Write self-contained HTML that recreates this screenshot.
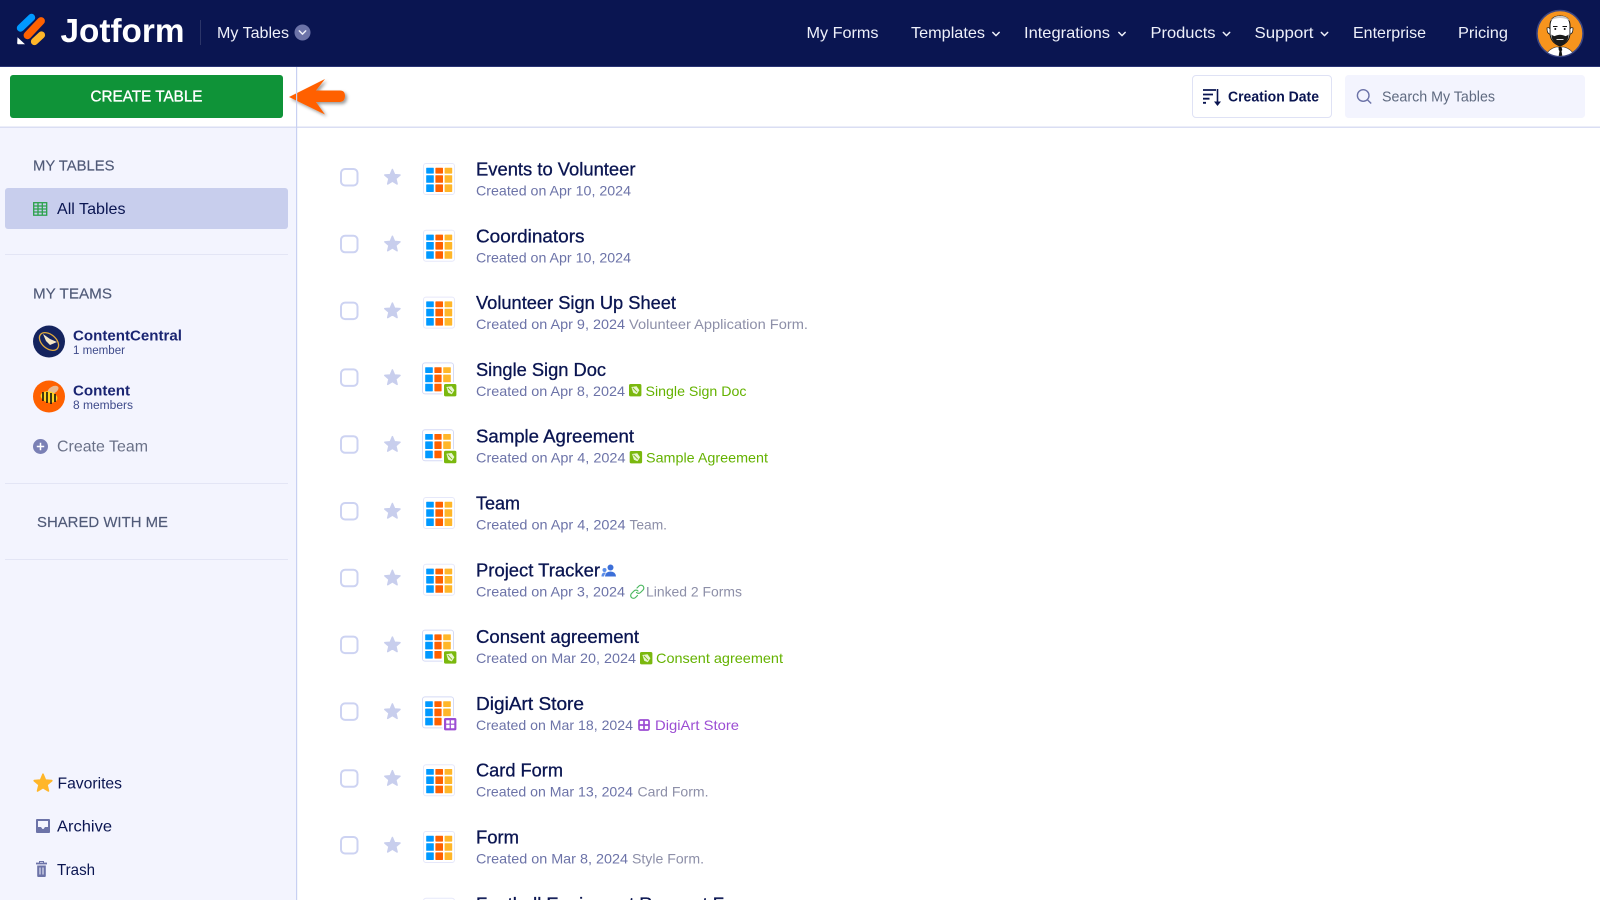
<!DOCTYPE html>
<html lang="en"><head><meta charset="utf-8"><title>My Tables</title>
<style>
html,body{margin:0;padding:0;background:#fff;width:1600px;height:900px;overflow:hidden}
svg{display:block;filter:blur(.3px)}
text{font-family:"Liberation Sans",sans-serif}
.nav{font-size:16px;fill:#eef0fa}
.t{font-size:18px;fill:#0a1551;stroke:#0a1551;stroke-width:.3}
.s{font-size:13.8px;fill:#6c73a8}
.d{font-size:13.8px;fill:#8d8fa8}
.g{font-size:13.8px;fill:#64b200}
.p{font-size:13.8px;fill:#9c4dd3}
.h{font-size:14.5px;fill:#505a78;stroke:#505a78;stroke-width:.15}
.m{font-size:16px;fill:#0a1551}
</style></head><body>
<svg width="1600" height="900" viewBox="0 0 1600 900" xmlns="http://www.w3.org/2000/svg">
<defs>
<filter id="sh" x="-20%" y="-30%" width="150%" height="170%"><feDropShadow dx="2" dy="2" stdDeviation="1.5" flood-color="#000" flood-opacity=".4"/></filter>
<path id="star" d="M0-8 2.12-2.91 7.6-2.47 3.42 1.11 4.7 6.47 0 3.6-4.7 6.47-3.42 1.11-7.6-2.47-2.12-2.91Z" stroke-width="1.5" stroke-linejoin="round"/>
<g id="base">
<rect x="341" y="169" width="16.5" height="16.5" rx="4" fill="#fff" stroke="#cdd3f2" stroke-width="2"/>
<use href="#star" x="392.4" y="177.5" fill="#c8ceed" stroke="#c8ceed"/>
</g>
<g id="tb">
<rect x="423.5" y="163.5" width="31" height="31" rx="2.5" fill="#fff" stroke="#e6e8fa"/>
<rect x="426.2" y="167.8" width="7.6" height="5.8" rx=".6" fill="#0099ff"/><rect x="435.4" y="167.8" width="7.6" height="5.8" rx=".6" fill="#ff6100"/><rect x="444.6" y="167.8" width="7.6" height="5.8" rx=".6" fill="#ffb629"/>
<rect x="426.2" y="175.2" width="7.6" height="7.6" rx=".6" fill="#0099ff"/><rect x="435.4" y="175.2" width="7.6" height="7.6" rx=".6" fill="#ff6100"/><rect x="444.6" y="175.2" width="7.6" height="7.6" rx=".6" fill="#ffb629"/>
<rect x="426.2" y="184.4" width="7.6" height="7.6" rx=".6" fill="#0099ff"/><rect x="435.4" y="184.4" width="7.6" height="7.6" rx=".6" fill="#ff6100"/><rect x="444.6" y="184.4" width="7.6" height="7.6" rx=".6" fill="#ffb629"/>
</g>
<g id="row"><use href="#base"/><use href="#tb"/></g>
<g id="tbb">
<rect x="422.5" y="162.5" width="31" height="31" rx="2.5" fill="#fff" stroke="#d5daf5"/>
<rect x="425.2" y="166.8" width="7.6" height="5.8" rx=".6" fill="#0099ff"/><rect x="434.4" y="166.8" width="7.2" height="5.8" rx=".6" fill="#ff6100"/><rect x="443.2" y="166.8" width="7.6" height="5.8" rx=".6" fill="#ffb629"/>
<rect x="425.2" y="174.2" width="7.6" height="7.6" rx=".6" fill="#0099ff"/><rect x="434.4" y="174.2" width="7.2" height="7.6" rx=".6" fill="#ff6100"/><rect x="443.2" y="174.2" width="7.6" height="7.6" rx=".6" fill="#ffb629"/>
<rect x="425.2" y="183.4" width="7.6" height="7.6" rx=".6" fill="#0099ff"/><rect x="434.4" y="183.4" width="7.2" height="7.6" rx=".6" fill="#ff6100"/>
<rect x="442.5" y="182" width="14.5" height="14.5" rx="1" fill="#fff"/>
</g>
<g id="leaf"><rect x="0" y="0" width="12.4" height="12.4" rx="1.6" fill="#7ab80e"/><path d="M2.4 3 7.6 2.2 10.4 6.2 7.8 10.2 4.2 8.8Z" fill="#e8f5d0"/><path d="M3.8 3.8 8 8.2" stroke="#7ab80e" stroke-width=".9"/></g>
<g id="rowg"><use href="#base"/><use href="#tbb"/><use href="#leaf" x="444" y="183.6"/></g>
<g id="pur" fill="none" stroke="#9c4dd3" stroke-width="1.7"><rect x="1" y="1" width="10" height="10" rx="1.4"/><path d="M6 1v10M1 6h10"/></g>
<g id="rowp"><use href="#base"/><use href="#tbb"/><rect x="444" y="183.6" width="12.4" height="12.4" rx="1.6" fill="#9c4dd3"/><path d="M446.2 185.8h3.4v3.4h-3.4zM450.9 185.8h3.4v3.4h-3.4zM446.2 190.4h3.4v3.4h-3.4zM450.9 190.4h3.4v3.4h-3.4z" fill="#fff"/></g>
<path id="chev" d="M-3.2-1.6 0 1.6 3.2-1.6" fill="none" stroke="#eef0fa" stroke-width="1.5" stroke-linecap="round" stroke-linejoin="round"/>
<clipPath id="av"><circle cx="1560" cy="33.5" r="22.5"/></clipPath>
</defs>

<!-- header -->
<rect width="1600" height="67" fill="#0a1551"/>
<rect y="66" width="1600" height="1" fill="#2a3474"/>
<path d="M20.500 28 31.500 17.500" stroke="#0099ff" stroke-width="7.400" stroke-linecap="round"/>
<path d="M27.500 35.300 41 21" stroke="#ff6100" stroke-width="7.800" stroke-linecap="round"/>
<path d="M34.500 41.500 41.500 35" stroke="#ffb629" stroke-width="7.200" stroke-linecap="round"/>
<path d="M17.500 37.200 25 44.300H18.600Q17.200 44.300 17.200 43Z" fill="#fff"/>
<text x="60.500" y="42" font-size="33" font-weight="700" fill="#fff" textLength="124" lengthAdjust="spacingAndGlyphs">Jotform</text>
<rect x="200" y="20" width="1" height="25" fill="#2c3568"/>
<text x="217" y="38" class="nav" textLength="72" lengthAdjust="spacingAndGlyphs">My Tables</text>
<circle cx="302.500" cy="32.500" r="8" fill="#6c73a8"/><use href="#chev" x="302.500" y="32.500"/>
<text x="806.500" y="38" class="nav" textLength="72" lengthAdjust="spacingAndGlyphs">My Forms</text>
<text x="911" y="38" class="nav" textLength="74" lengthAdjust="spacingAndGlyphs">Templates</text><use href="#chev" x="996" y="34"/>
<text x="1024" y="38" class="nav" textLength="86" lengthAdjust="spacingAndGlyphs">Integrations</text><use href="#chev" x="1122" y="34"/>
<text x="1150.500" y="38" class="nav" textLength="65" lengthAdjust="spacingAndGlyphs">Products</text><use href="#chev" x="1226.500" y="34"/>
<text x="1254.500" y="38" class="nav" textLength="59" lengthAdjust="spacingAndGlyphs">Support</text><use href="#chev" x="1324.500" y="34"/>
<text x="1353" y="38" class="nav" textLength="73" lengthAdjust="spacingAndGlyphs">Enterprise</text>
<text x="1458" y="38" class="nav" textLength="50" lengthAdjust="spacingAndGlyphs">Pricing</text>
<!-- user avatar -->
<circle cx="1560" cy="33.500" r="23" fill="#f7941d" stroke="#3b4684" stroke-width="1.500"/>
<g clip-path="url(#av)">
<path d="M1544 58Q1548 49 1556 47H1564Q1572 49 1576 58Z" fill="#fff" stroke="#222" stroke-width=".6"/>
<path d="M1558.500 47h3l.8 3-.8 1 1 6h-4l1-6-.8-1z" fill="#111"/>
<path d="M1550 25Q1550.500 16 1560 16 1569.500 16 1570 25V34Q1569 43 1560 46 1551 43 1550 34Z" fill="#fff" stroke="#111" stroke-width="1"/>
<path d="M1550 21Q1555 15 1560 16 1566 15 1570 21 1566 18 1560 18 1554 18 1550 21Z" fill="#c8c8c8"/>
<path d="M1551.500 34.500Q1554 37 1556 35.500 1560 34 1564 35.500 1566 37 1568.500 34.500 1569 42 1560 46 1551 42 1551.500 34.500Z" fill="#1a1a1a"/>
<path d="M1556.500 39.500h7" stroke="#ddd" stroke-width=".9"/>
<path d="M1553 26.500h4.500M1562.500 26.500h4.500" stroke="#111" stroke-width="1.100"/><circle cx="1555.300" cy="29" r="1" fill="#111"/><circle cx="1564.700" cy="29" r="1" fill="#111"/>
<path d="M1547 28q2-1 3 1v5q-3 0-3-6ZM1573 28q-2-1-3 1v5q3 0 3-6Z" fill="#fff" stroke="#111" stroke-width=".7"/>
</g>

<!-- toolbar -->
<rect x="0" y="126.500" width="1600" height="1.500" fill="#dadef3"/>
<rect x="10" y="75" width="273" height="43" rx="3" fill="#0f9338"/>
<text x="90.500" y="101.700" font-size="16" fill="#fff" stroke="#fff" stroke-width=".35" textLength="112" lengthAdjust="spacingAndGlyphs">CREATE TABLE</text>
<path d="M289 97 325 79 316 90.500H340Q345 90.500 345 96T340 102H316L325 114.500Z" fill="#ff6100" filter="url(#sh)"/>
<rect x="1192.500" y="75.500" width="139" height="42" rx="3.500" fill="#fff" stroke="#dfe2f5"/>
<path d="M1203 90h13M1203 94.500h10M1203 98.700h6.500M1203 102.800h3" stroke="#0a1551" stroke-width="1.800"/>
<path d="M1217.500 89v13" stroke="#0a1551" stroke-width="1.600"/><path d="M1214 101.500h7l-3.500 4.500z" fill="#0a1551"/>
<text x="1228" y="101.500" font-size="14.500" font-weight="700" fill="#0a1551" textLength="91" lengthAdjust="spacingAndGlyphs">Creation Date</text>
<rect x="1345" y="75" width="240" height="43" rx="3.500" fill="#f3f4fe"/>
<circle cx="1363.200" cy="95.500" r="5.800" fill="none" stroke="#6c73a8" stroke-width="1.400"/><path d="M1367.400 99.700 1371.200 103.500" stroke="#6c73a8" stroke-width="1.400"/>
<text x="1382" y="101.500" font-size="14.500" fill="#5f6a80" textLength="113" lengthAdjust="spacingAndGlyphs">Search My Tables</text>

<!-- sidebar -->
<rect x="0" y="128" width="296" height="772" fill="#f3f4fe"/>
<rect x="296" y="67" width="1.200" height="833" fill="#c8d0f2"/>
<text x="33" y="170.500" class="h" textLength="81.500" lengthAdjust="spacingAndGlyphs">MY TABLES</text>
<rect x="5" y="188" width="283" height="41" rx="3" fill="#c8ceed"/>
<g fill="none" stroke="#2ba14b" stroke-width="1.300"><rect x="33.700" y="202.700" width="13" height="12.500"/><path d="M38 203v12M42.300 203v12M34 206h13M34 209h13M34 212h13"/></g>
<text x="57" y="214" class="m" textLength="68.500" lengthAdjust="spacingAndGlyphs">All Tables</text>
<rect x="5" y="254" width="283" height="1" fill="#e3e5f5"/>
<text x="33" y="298.500" class="h" textLength="79" lengthAdjust="spacingAndGlyphs">MY TEAMS</text>
<circle cx="49" cy="341.500" r="16" fill="#14235e"/>
<ellipse cx="49" cy="341.500" rx="11" ry="7" transform="rotate(40 49 341.500)" fill="none" stroke="#e0a93c" stroke-width="1.300"/>
<path d="M43 334 50 339 57 342 50 345 46 341Z" fill="#f6e9c8"/>
<text x="73" y="340.500" font-size="14.500" font-weight="700" fill="#1a2572" textLength="109" lengthAdjust="spacingAndGlyphs">ContentCentral</text>
<text x="73" y="354" font-size="11.500" fill="#3e4a8a" textLength="52" lengthAdjust="spacingAndGlyphs">1 member</text>
<circle cx="49" cy="396.500" r="16" fill="#ff6100"/>
<ellipse cx="53" cy="390" rx="6" ry="3.500" transform="rotate(-30 53 390)" fill="#e8b98f"/>
<ellipse cx="49" cy="397" rx="8.500" ry="5.500" transform="rotate(15 49 397)" fill="#ffd21f"/>
<path d="M43 392v9M47 392v11M51 393v11M55 394v8" stroke="#111" stroke-width="1.600"/>
<text x="73" y="395.500" font-size="14.500" font-weight="700" fill="#1a2572" textLength="57" lengthAdjust="spacingAndGlyphs">Content</text>
<text x="73" y="409" font-size="11.500" fill="#3e4a8a" textLength="60" lengthAdjust="spacingAndGlyphs">8 members</text>
<circle cx="40.500" cy="446.500" r="7.500" fill="#7a80b5"/><path d="M36.800 446.500h7.400M40.500 442.800v7.400" stroke="#fff" stroke-width="1.500"/>
<text x="57" y="451.500" font-size="16" fill="#6a7188" textLength="91" lengthAdjust="spacingAndGlyphs">Create Team</text>
<rect x="5" y="483" width="283" height="1" fill="#e3e5f5"/>
<text x="37" y="527" class="h" textLength="131" lengthAdjust="spacingAndGlyphs">SHARED WITH ME</text>
<rect x="5" y="559" width="283" height="1" fill="#e3e5f5"/>
<g transform="translate(43 783.500) scale(1.150)"><use href="#star" fill="#ffb629" stroke="#ffb629"/></g>
<text x="57.500" y="788.500" class="m" textLength="64.500" lengthAdjust="spacingAndGlyphs">Favorites</text>
<rect x="36" y="819" width="14" height="14" rx="1" fill="#6c73a8"/><path d="M38 821h10v6h-3l-1.500 2h-1l-1.500-2h-3z" fill="#f3f4fe"/>
<text x="57" y="831.500" class="m" textLength="55" lengthAdjust="spacingAndGlyphs">Archive</text>
<path d="M36 863.500h11" stroke="#6c73a8" stroke-width="1.800"/><path d="M39.500 863v-1.500h4v1.500" stroke="#6c73a8" fill="none"/>
<path d="M37.200 865.500h8.600V876a1 1 0 0 1-1 1h-6.600a1 1 0 0 1-1-1z" fill="#6c73a8"/><path d="M40 867.500v7M43 867.500v7" stroke="#f3f4fe"/>
<text x="57" y="875" class="m" textLength="38" lengthAdjust="spacingAndGlyphs">Trash</text>

<!-- rows -->
<use href="#row"/>
<text x="476" y="175.700" class="t" textLength="159.500" lengthAdjust="spacingAndGlyphs">Events to Volunteer</text>
<text x="476" y="195.500" class="s" textLength="155" lengthAdjust="spacingAndGlyphs">Created on Apr 10, 2024</text>

<use href="#row" y="66.800"/>
<text x="476" y="242.500" class="t" textLength="108.500" lengthAdjust="spacingAndGlyphs">Coordinators</text>
<text x="476" y="262.300" class="s" textLength="155" lengthAdjust="spacingAndGlyphs">Created on Apr 10, 2024</text>

<use href="#row" y="133.600"/>
<text x="476" y="309" class="t" textLength="200" lengthAdjust="spacingAndGlyphs">Volunteer Sign Up Sheet</text>
<text x="476" y="329.100" class="s" textLength="149" lengthAdjust="spacingAndGlyphs">Created on Apr 9, 2024</text>
<text x="629" y="329.100" class="d" textLength="179" lengthAdjust="spacingAndGlyphs">Volunteer Application Form.</text>

<use href="#rowg" y="200.400"/>
<text x="476" y="375.800" class="t" textLength="130" lengthAdjust="spacingAndGlyphs">Single Sign Doc</text>
<text x="476" y="395.900" class="s" textLength="149" lengthAdjust="spacingAndGlyphs">Created on Apr 8, 2024</text>
<use href="#leaf" x="629" y="384"/>
<text x="645.500" y="395.900" class="g" textLength="101" lengthAdjust="spacingAndGlyphs">Single Sign Doc</text>

<use href="#rowg" y="267.200"/>
<text x="476" y="442.600" class="t" textLength="158" lengthAdjust="spacingAndGlyphs">Sample Agreement</text>
<text x="476" y="462.700" class="s" textLength="149.500" lengthAdjust="spacingAndGlyphs">Created on Apr 4, 2024</text>
<use href="#leaf" x="629.700" y="451"/>
<text x="646" y="462.700" class="g" textLength="122" lengthAdjust="spacingAndGlyphs">Sample Agreement</text>

<use href="#row" y="334"/>
<text x="476" y="509.400" class="t" textLength="44" lengthAdjust="spacingAndGlyphs">Team</text>
<text x="476" y="529.500" class="s" textLength="149.500" lengthAdjust="spacingAndGlyphs">Created on Apr 4, 2024</text>
<text x="629.500" y="529.500" class="d" textLength="37.500" lengthAdjust="spacingAndGlyphs">Team.</text>

<use href="#row" y="400.800"/>
<text x="476" y="576.600" class="t" textLength="124" lengthAdjust="spacingAndGlyphs">Project Tracker</text>
<circle cx="610.500" cy="567.500" r="3" fill="#3c6fd8"/><path d="M605 576.500q.5-5 5.500-5t5.500 5z" fill="#3c6fd8"/><circle cx="604.500" cy="570" r="2" fill="#5b8de8"/><path d="M601.500 576.500q0-4 3-4 1 0 1.500 .5-1.500 1-2 3.500z" fill="#5b8de8"/>
<text x="476" y="596.300" class="s" textLength="149" lengthAdjust="spacingAndGlyphs">Created on Apr 3, 2024</text>
<g fill="none" stroke="#4cb860" stroke-width="1.200" stroke-linecap="round"><path d="M637 588l2-2a2.800 2.800 0 0 1 4 4l-2.500 2.500a2.800 2.800 0 0 1-4 0"/><path d="M637.500 595.500l-2 2a2.800 2.800 0 0 1-4-4l2.500-2.500a2.800 2.800 0 0 1 4 0"/></g>
<text x="646" y="596.300" class="d" textLength="96" lengthAdjust="spacingAndGlyphs">Linked 2 Forms</text>

<use href="#rowg" y="467.600"/>
<text x="476" y="643" class="t" textLength="163" lengthAdjust="spacingAndGlyphs">Consent agreement</text>
<text x="476" y="663.100" class="s" textLength="160" lengthAdjust="spacingAndGlyphs">Created on Mar 20, 2024</text>
<use href="#leaf" x="640" y="652"/>
<text x="656" y="663.100" class="g" textLength="127" lengthAdjust="spacingAndGlyphs">Consent agreement</text>

<use href="#rowp" y="534.400"/>
<text x="476" y="709.800" class="t" textLength="108" lengthAdjust="spacingAndGlyphs">DigiArt Store</text>
<text x="476" y="729.900" class="s" textLength="157" lengthAdjust="spacingAndGlyphs">Created on Mar 18, 2024</text>
<use href="#pur" x="638" y="719"/>
<text x="655" y="729.900" class="p" textLength="84" lengthAdjust="spacingAndGlyphs">DigiArt Store</text>

<use href="#row" y="601.200"/>
<text x="476" y="776.600" class="t" textLength="87" lengthAdjust="spacingAndGlyphs">Card Form</text>
<text x="476" y="796.700" class="s" textLength="157" lengthAdjust="spacingAndGlyphs">Created on Mar 13, 2024</text>
<text x="637.500" y="796.700" class="d" textLength="71" lengthAdjust="spacingAndGlyphs">Card Form.</text>

<use href="#row" y="668"/>
<text x="476" y="843.400" class="t" textLength="43" lengthAdjust="spacingAndGlyphs">Form</text>
<text x="476" y="863.500" class="s" textLength="152" lengthAdjust="spacingAndGlyphs">Created on Mar 8, 2024</text>
<text x="632" y="863.500" class="d" textLength="72" lengthAdjust="spacingAndGlyphs">Style Form.</text>

<use href="#row" y="734.800"/>
<text x="476" y="910.500" class="t" textLength="248" lengthAdjust="spacingAndGlyphs">Football Equipment Request F</text>
</svg>
</body></html>
